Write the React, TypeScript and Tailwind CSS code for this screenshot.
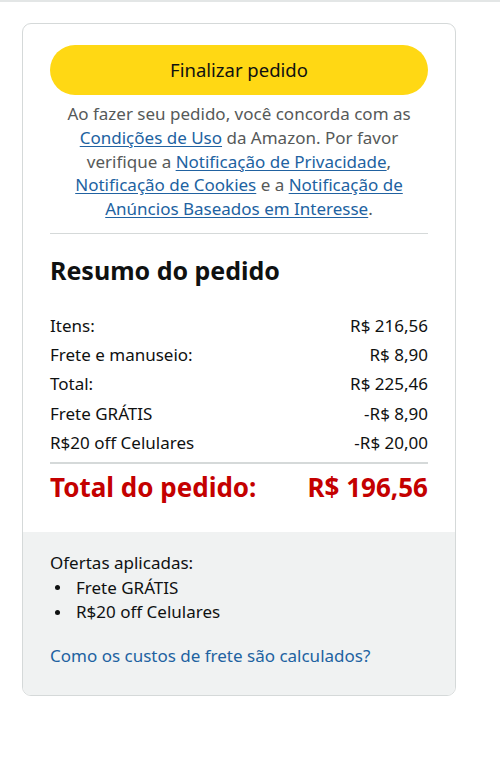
import React from "react";

const rows = [
  { label: "Itens:", value: "R$ 216,56" },
  { label: "Frete e manuseio:", value: "R$ 8,90" },
  { label: "Total:", value: "R$ 225,46" },
  { label: "Frete GRÁTIS", value: "-R$ 8,90" },
  { label: "R$20 off Celulares", value: "-R$ 20,00" },
];

const offers = ["Frete GRÁTIS", "R$20 off Celulares"];

function A({ children }: { children: React.ReactNode }) {
  return (
    <a href="#" className="text-[#2162a1] underline underline-offset-2">
      {children}
    </a>
  );
}

export default function App() {
  return (
    <div
      className="min-h-[778px] border-t-2 border-[#e3e6e6] bg-white text-[#0f1111]"
      style={{ fontFamily: '"Noto Sans", "Open Sans", sans-serif' }}
    >
      <div className="ml-[22px] mt-[21px] w-[434px] overflow-hidden rounded-[9px] border border-[#d5d9d9]">
        {/* top block */}
        <div className="px-[27px] pt-[21px] pb-[30px]">
          <button className="h-[50px] w-full rounded-full bg-[#ffd814] text-[18.5px] text-[#0f1111]">
            Finalizar pedido
          </button>
          <p className="mt-[7px] text-center text-[17px] leading-[23.8px] text-[#565959]">
            Ao fazer seu pedido, você concorda com as <A>Condições de Uso</A> da
            Amazon. Por favor verifique a <A>Notificação de Privacidade</A>,{" "}
            <A>Notificação de Cookies</A> e a{" "}
            <A>Notificação de Anúncios Baseados em Interesse</A>.
          </p>
          <div className="mt-[12px] h-px bg-[#d5d9d9]" />

          <h2 className="mt-[20px] text-[25px] font-bold leading-[32px]">Resumo do pedido</h2>

          <div className="mt-[25px] text-[17px]">
            {rows.map((r) => (
              <div key={r.label} className="flex h-[29.25px] items-center justify-between">
                <span>{r.label}</span>
                <span>{r.value}</span>
              </div>
            ))}
          </div>
          <div className="mt-[5px] h-[2px] bg-[#d5d9d9]" />
          <div className="mt-[8px] flex items-center justify-between text-[26px] font-bold leading-[30px] text-[#c40000]">
            <span>Total do pedido:</span>
            <span>R$ 196,56</span>
          </div>
        </div>

        {/* offers */}
        <div className="bg-[#f0f2f2] px-[27px] pt-[19px] pb-[27px] text-[17px] leading-[24.5px]">
          <div>Ofertas aplicadas:</div>
          {offers.map((o) => (
            <div key={o} className="flex items-center">
              <span className="ml-[5px] mr-[16px] h-[5px] w-[5px] rounded-full bg-[#0f1111]" />
              <span>{o}</span>
            </div>
          ))}
          <a href="#" className="mt-[19px] block text-[#2162a1]">
            Como os custos de frete são calculados?
          </a>
        </div>
      </div>
    </div>
  );
}
